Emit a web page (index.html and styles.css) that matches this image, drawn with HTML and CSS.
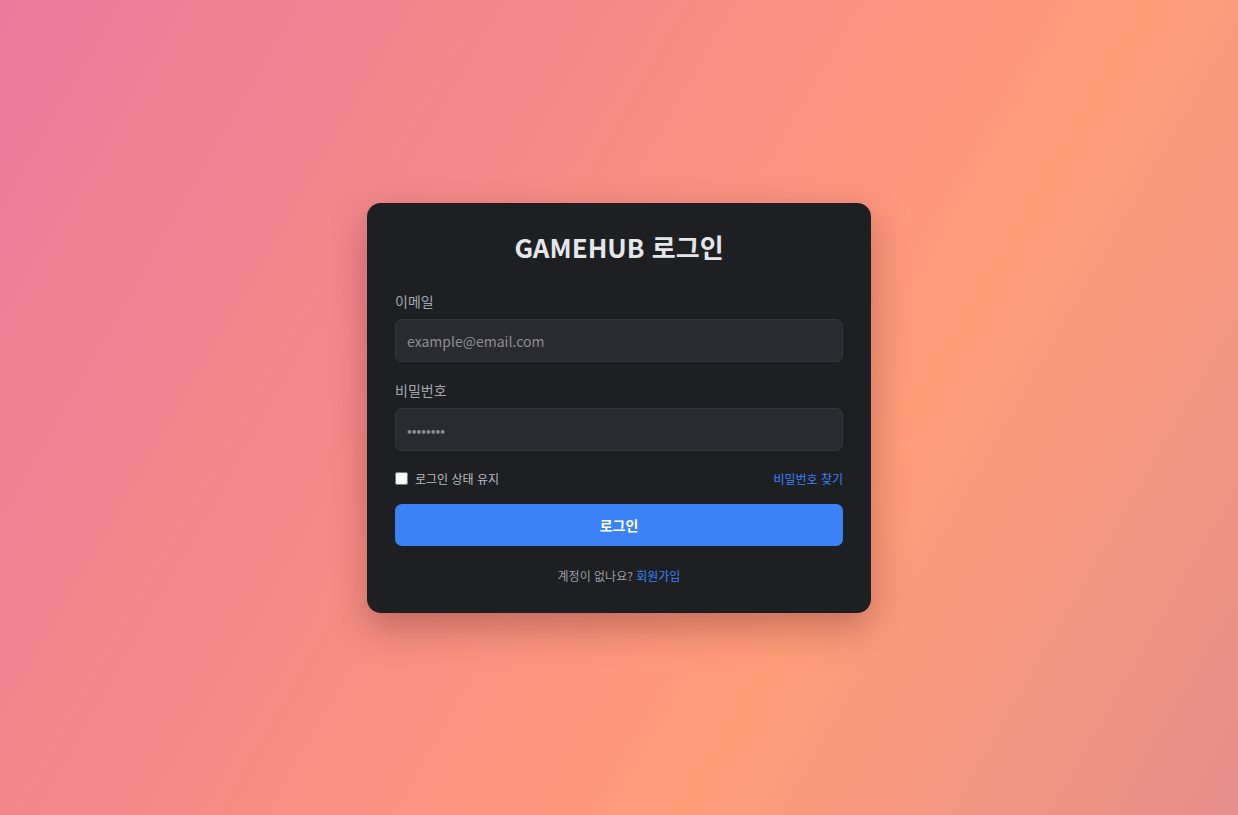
FILE: index.html
```html
<!DOCTYPE html>
<html lang="ko">
<head>
<meta charset="utf-8">
<title>GAMEHUB 로그인</title>
<link rel="stylesheet" href="styles.css">
</head>
<body>
<main class="page">
  <form class="card">
    <h1 class="title">GAMEHUB 로그인</h1>
    <div class="field">
      <label class="label" for="email">이메일</label>
      <input class="input" id="email" type="email" placeholder="example@email.com">
    </div>
    <div class="field">
      <label class="label" for="pw">비밀번호</label>
      <input class="input pw" id="pw" type="password" placeholder="••••••••">
    </div>
    <div class="row">
      <label class="remember"><input type="checkbox" class="check"><span>로그인 상태 유지</span></label>
      <a class="link" href="#">비밀번호 찾기</a>
    </div>
    <button class="btn" type="button">로그인</button>
    <p class="footer">계정이 없나요? <a class="link" href="#">회원가입</a></p>
  </form>
</main>
</body>
</html>
```
FILE: styles.css
```css
* { box-sizing: border-box; }
html, body { margin: 0; height: 100%; }
body {
  font-family: "Noto Sans CJK KR", "Noto Sans", sans-serif;
  background: linear-gradient(120deg, #e87b9c 0%, #f48a88 35%, #ff9d78 68%, #e68e8a 100%);
}
.page {
  height: 815px;
  display: flex;
  align-items: flex-start;
  justify-content: center;
  padding-top: 203px;
}
.card {
  width: 504px;
  background: #1e1f23;
  border-radius: 14px;
  padding: 26px 28px 27px;
  box-shadow: 0 14px 36px rgba(90, 30, 30, 0.35);
}
.title {
  margin: 0 0 26px;
  text-align: center;
  font-size: 26px;
  line-height: 36px;
  font-weight: 700;
  color: #e4e6ea;
}
.field { margin-bottom: 18px; }
.label {
  display: block;
  font-size: 14px;
  line-height: 20px;
  color: #a3a6ad;
  margin-bottom: 8px;
}
.input {
  display: block;
  width: 100%;
  height: 43px;
  background: #2a2b30;
  border: 1px solid #35363b;
  border-radius: 7px;
  padding: 0 11px;
  font-family: inherit;
  font-size: 14px;
  color: #e4e6ea;
  outline: none;
}
.input::placeholder { color: #8c8e94; }
.row {
  display: flex;
  justify-content: space-between;
  align-items: center;
  margin-top: -1px;
  margin-bottom: 16px;
  height: 20px;
}
.remember {
  display: flex;
  align-items: center;
  gap: 7px;
  font-size: 12px;
  color: #b9bbc1;
}
.check {
  margin: 0;
  width: 13px;
  height: 13px;
  accent-color: #3b82f6;
}
.link {
  color: #3b82f6;
  text-decoration: none;
  font-size: 12px;
}
.btn {
  display: block;
  width: 100%;
  height: 42px;
  border: 0;
  border-radius: 7px;
  background: #3b82f6;
  color: #ffffff;
  font-family: inherit;
  font-size: 14px;
  font-weight: 700;
}
.footer {
  margin: 20px 0 0;
  text-align: center;
  font-size: 12px;
  line-height: 20px;
  color: #9c9ea5;
}
```
